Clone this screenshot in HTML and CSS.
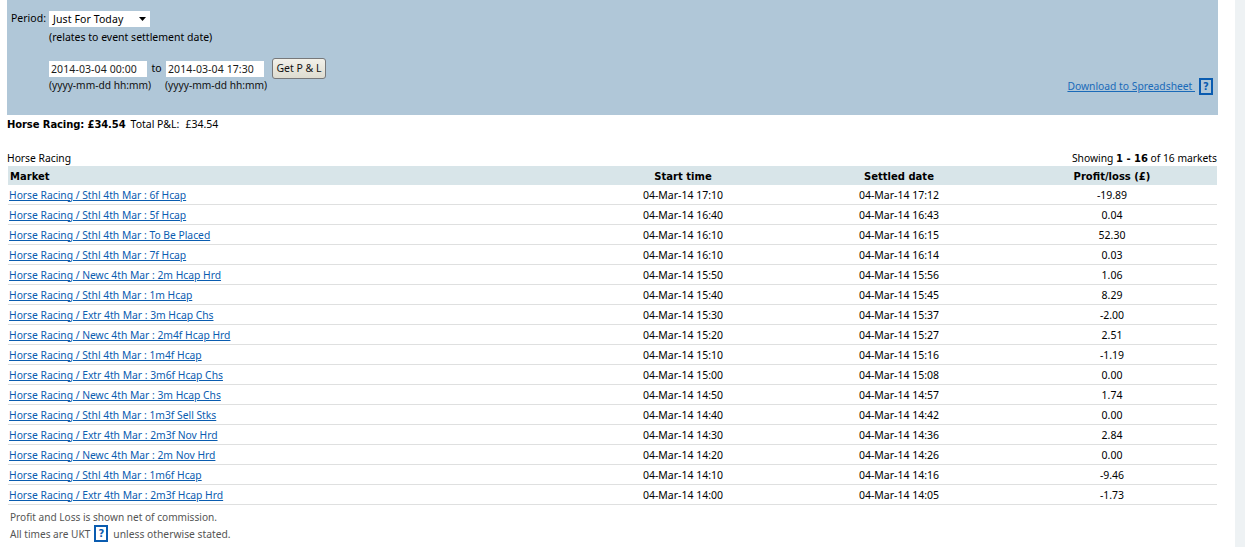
FILE: index.html
```
<!DOCTYPE html>
<html lang="en">
<head>
<meta charset="utf-8">
<title>Profit and Loss</title>
<link rel="stylesheet" href="styles.css">
</head>
<body>
<div class="page">
  <main class="main">
    <section class="filter">
      <div class="filter-left">
        <div class="period-row">
          <span class="period-label">Period:</span>
          <div class="period-fields">
            <div class="select"><span>Just For Today</span><svg class="caret" width="7" height="4" viewBox="0 0 7 4"><path d="M0 0h7L3.500 4z" fill="#000"/></svg></div>
            <div class="hint">(relates to event settlement date)</div>
          </div>
        </div>
        <div class="dates">
          <div class="date-row">
            <span class="input">2014-03-04 00:00</span>
            <span class="to">to</span>
            <span class="input">2014-03-04 17:30</span>
            <button class="btn" type="button">Get P &amp; L</button>
          </div>
          <div class="format-row">
            <span class="format">(yyyy-mm-dd hh:mm)</span>
            <span class="format">(yyyy-mm-dd hh:mm)</span>
          </div>
        </div>
      </div>
      <div class="download"><a href="#">Download to Spreadsheet&nbsp;</a><span class="help">?</span></div>
    </section>
    <div class="totals"><b>Horse Racing: £34.54</b><span class="total">Total P&amp;L:</span><span class="total-val">£34.54</span></div>
    <div class="caption"><span>Horse Racing</span><span>Showing <b>1 - 16</b> of 16 markets</span></div>
    <table class="markets">
      <thead>
        <tr><th class="c-market">Market</th><th class="c-start">Start time</th><th class="c-settled">Settled date</th><th class="c-pl">Profit/loss (£)</th></tr>
      </thead>
      <tbody>
        <tr><td><a href="#">Horse Racing / Sthl 4th Mar : 6f Hcap</a></td><td>04-Mar-14 17:10</td><td>04-Mar-14 17:12</td><td>-19.89</td></tr>
        <tr><td><a href="#">Horse Racing / Sthl 4th Mar : 5f Hcap</a></td><td>04-Mar-14 16:40</td><td>04-Mar-14 16:43</td><td>0.04</td></tr>
        <tr><td><a href="#">Horse Racing / Sthl 4th Mar : To Be Placed</a></td><td>04-Mar-14 16:10</td><td>04-Mar-14 16:15</td><td>52.30</td></tr>
        <tr><td><a href="#">Horse Racing / Sthl 4th Mar : 7f Hcap</a></td><td>04-Mar-14 16:10</td><td>04-Mar-14 16:14</td><td>0.03</td></tr>
        <tr><td><a href="#">Horse Racing / Newc 4th Mar : 2m Hcap Hrd</a></td><td>04-Mar-14 15:50</td><td>04-Mar-14 15:56</td><td>1.06</td></tr>
        <tr><td><a href="#">Horse Racing / Sthl 4th Mar : 1m Hcap</a></td><td>04-Mar-14 15:40</td><td>04-Mar-14 15:45</td><td>8.29</td></tr>
        <tr><td><a href="#">Horse Racing / Extr 4th Mar : 3m Hcap Chs</a></td><td>04-Mar-14 15:30</td><td>04-Mar-14 15:37</td><td>-2.00</td></tr>
        <tr><td><a href="#">Horse Racing / Newc 4th Mar : 2m4f Hcap Hrd</a></td><td>04-Mar-14 15:20</td><td>04-Mar-14 15:27</td><td>2.51</td></tr>
        <tr><td><a href="#">Horse Racing / Sthl 4th Mar : 1m4f Hcap</a></td><td>04-Mar-14 15:10</td><td>04-Mar-14 15:16</td><td>-1.19</td></tr>
        <tr><td><a href="#">Horse Racing / Extr 4th Mar : 3m6f Hcap Chs</a></td><td>04-Mar-14 15:00</td><td>04-Mar-14 15:08</td><td>0.00</td></tr>
        <tr><td><a href="#">Horse Racing / Newc 4th Mar : 3m Hcap Chs</a></td><td>04-Mar-14 14:50</td><td>04-Mar-14 14:57</td><td>1.74</td></tr>
        <tr><td><a href="#">Horse Racing / Sthl 4th Mar : 1m3f Sell Stks</a></td><td>04-Mar-14 14:40</td><td>04-Mar-14 14:42</td><td>0.00</td></tr>
        <tr><td><a href="#">Horse Racing / Extr 4th Mar : 2m3f Nov Hrd</a></td><td>04-Mar-14 14:30</td><td>04-Mar-14 14:36</td><td>2.84</td></tr>
        <tr><td><a href="#">Horse Racing / Newc 4th Mar : 2m Nov Hrd</a></td><td>04-Mar-14 14:20</td><td>04-Mar-14 14:26</td><td>0.00</td></tr>
        <tr><td><a href="#">Horse Racing / Sthl 4th Mar : 1m6f Hcap</a></td><td>04-Mar-14 14:10</td><td>04-Mar-14 14:16</td><td>-9.46</td></tr>
        <tr><td><a href="#">Horse Racing / Extr 4th Mar : 2m3f Hcap Hrd</a></td><td>04-Mar-14 14:00</td><td>04-Mar-14 14:05</td><td>-1.73</td></tr>
      </tbody>
    </table>
    <div class="notes">
      <div class="note">Profit and Loss is shown net of commission.</div>
      <div class="note note-ukt">All times are UKT<span class="help">?</span><span class="unless">unless otherwise stated.</span></div>
    </div>
  </main>
  <aside class="strip"></aside>
</div>
</body>
</html>
```
FILE: styles.css
```
* { box-sizing: border-box; }
html, body { margin: 0; height: 100%; overflow: hidden; background: #fff; }
body { font: 10.5px/13px "Noto Sans", "DejaVu Sans", sans-serif; color: #000; }
b, .markets th { font-family: "DejaVu Sans", sans-serif; font-size: 10px; font-weight: 700; }
.page { display: flex; height: 547px; }
.main { width: 1235px; padding-left: 7px; padding-right: 17px; }
.strip { width: 10px; background: #eef2f4; }
a { color: #0a5cb0; }

.filter { height: 115px; background: #b0c7d8; display: flex; justify-content: space-between; padding: 11px 5px 0 4px; }
.period-row { display: flex; }
.period-label { width: 38px; line-height: 15px; }
.select { width: 101px; height: 16px; background: #fff; display: flex; align-items: center; justify-content: space-between; padding: 0 4px 0 4px; letter-spacing: 0.1px; }
.hint { margin-top: 3px; line-height: 15px; }
.dates { margin-top: 13px; padding-left: 38px; }
.date-row { display: flex; align-items: flex-start; height: 21px; }
.input { width: 98px; height: 16px; margin-top: 3px; background: #fff; padding: 1px 2px; line-height: 14px; color: #1a1a1a; letter-spacing: 0.1px; }
.to { width: 19px; margin-top: 4px; text-align: center; }
.btn { font: inherit; margin-left: 8px; width: 54px; height: 21px; padding: 0; background: linear-gradient(#f2f1ea, #dedcd0); border: 1px solid #77787a; border-radius: 3px; color: #111; }
.format-row { display: flex; gap: 14px; color: #111; font-size: 10.2px; line-height: 15px; margin-top: -1px; }
.download { align-self: flex-end; margin-bottom: 20px; display: flex; align-items: center; font-size: 10.3px; }
.download a { color: #1a6ab8; }
.help { display: inline-flex; align-items: center; justify-content: center; width: 14px; height: 17px; border: 2px solid #0a5cb0; color: #0a5cb0; font: 700 10px "DejaVu Sans", sans-serif; margin-left: 4px; }

.totals { margin-top: 3px; height: 13px; display: flex; }
.totals b { letter-spacing: -0.1px; }
.total { margin-left: 5px; }
.total-val { margin-left: 6px; }
.caption { display: flex; justify-content: space-between; margin-top: 20px; padding: 0 1px 1px 0; height: 15px; line-height: 14px; font-size: 10.3px; }
.caption b { letter-spacing: -0.05px; }

.markets { width: 1209px; margin-left: 1px; border-collapse: separate; border-spacing: 0; table-layout: fixed; }
.markets th { height: 19px; background: #d8e5e9; text-align: center; padding: 1px 0 0; }
.markets th.c-market { text-align: left; padding-left: 2px; width: 567px; }
.c-start, .c-settled { width: 216px; }
.markets td { height: 20px; border-bottom: 1px solid #dfe0e0; text-align: center; padding: 1px 0 0; }
.markets td:first-child { text-align: left; padding-left: 1px; font-size: 10.3px; }

.notes { color: #555; padding: 5px 0 0 3px; font-size: 10.1px; }
.note { line-height: 14px; }
.note-ukt { display: flex; align-items: center; margin-top: 1px; }
.note-ukt .help { margin: 0 5px 0 4px; }
.unless { font-size: 10.3px; }
```
